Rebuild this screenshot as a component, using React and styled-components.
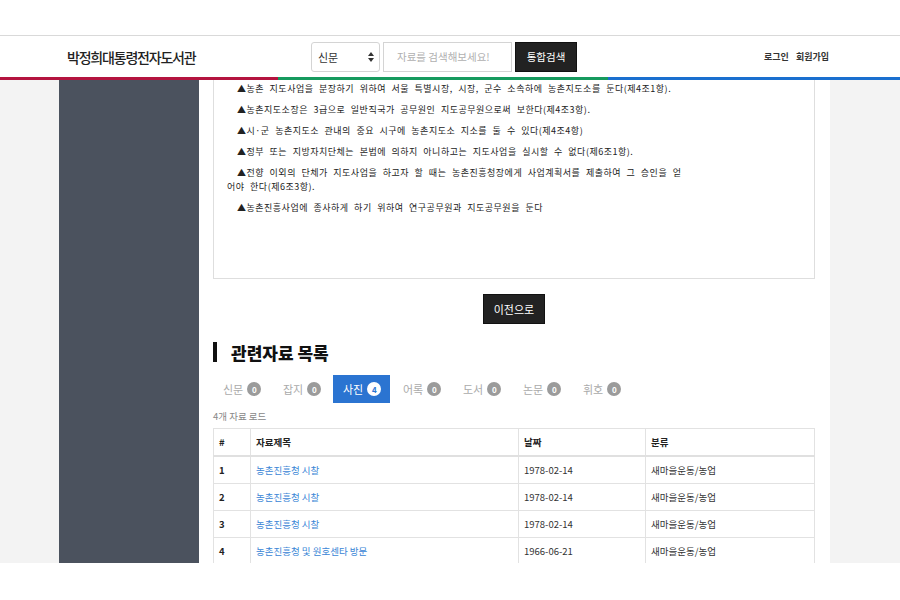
import React from 'react';
import styled, {createGlobalStyle} from "styled-components";

const Global = createGlobalStyle`
  body {
    margin: 0;
    background: #fff;
    font-family: "Noto Sans CJK KR", "Noto Sans", sans-serif;
    color: #333;
  }
`;

const Frame = styled.div`
  width: 900px;
  height: 600px;
  overflow: hidden;
  display: flex;
  flex-direction: column;
`;

const TopGap = styled.div`
  height: 35px;
  border-bottom: 1px solid #d9d9d9;
`;

const Header = styled.header`
  height: 41px;
  display: flex;
  align-items: center;
  padding: 0 71px 0 67px;
`;

const Logo = styled.h1`
  margin: 0;
  width: 141px;
  white-space: nowrap;
  font-size: 14px;
  font-weight: 500;
  letter-spacing: -1.2px;
  color: #222;
`;

const Search = styled.form`
  display: flex;
  gap: 3px;
  margin-left: 103px;
  height: 30px;
`;

const Select = styled.div`
  width: 69px;
  box-sizing: border-box;
  border: 1px solid #d4d4d4;
  border-radius: 3px;
  display: flex;
  align-items: center;
  justify-content: space-between;
  padding: 0 5px 0 6px;
  font-size: 11px;
  color: #333;
`;

const Input = styled.div`
  width: 129px;
  box-sizing: border-box;
  border: 1px solid #d4d4d4;
  display: flex;
  align-items: center;
  padding-left: 13px;
  font-size: 10.5px;
  color: #b0b0b0;
`;

const DarkButton = styled.button`
  border: none;
  background: #222;
  color: #fff;
  font-family: inherit;
  font-size: ${({small}) => small ? '11px' : '10.5px'};
  width: ${({w}) => w}px;
  height: ${({h}) => h}px;
  padding: 0;
  border: 1px solid #111;
`;

const UserMenu = styled.nav`
  margin-left: auto;
  display: flex;
  gap: 7px;
  font-size: 9px;
  font-weight: 700;
  color: #333;
`;

const ColorBar = styled.div`
  height: 3px;
  display: flex;
`;

const Stripe = styled.div`
  width: ${({w}) => w}px;
  flex: ${({w}) => w ? 'none' : 1};
  background: ${({c}) => c};
`;

const Main = styled.div`
  height: 483px;
  display: flex;
  overflow: hidden;
`;

const Gutter = styled.div`
  width: ${({w}) => w}px;
  background: #f3f3f3;
`;

const Sidebar = styled.aside`
  width: 140px;
  background: #4b525e;
`;

const Content = styled.section`
  width: 631px;
  box-sizing: border-box;
  padding: 0 15px 0 14px;
  background: #fff;
`;

const TextBox = styled.div`
  border: 1px solid #dedede;
  border-top: none;
  height: 196px;
  padding: 2px 0 0 13px;
`;

const Para = styled.p`
  margin: 0 0 7px;
  font-size: 9px;
  line-height: 14px;
  letter-spacing: 0.5px;
  word-spacing: 3px;
  text-indent: 10px;
  color: #222;
`;

const Center = styled.div`
  display: flex;
  justify-content: center;
  padding-top: 15px;
`;

const Heading = styled.h2`
  margin: 18px 0 0;
  display: flex;
  align-items: center;
  gap: 14px;
  font-size: 17px;
  font-weight: 900;
  color: #111;
  height: 20px;
  &::before {
    content: "";
    width: 4px;
    height: 20px;
    background: #111;
  }
`;

const Tabs = styled.div`
  display: flex;
  gap: 3px;
  margin-top: 13px;
`;

const Tab = styled.div`
  width: 57px;
  height: 28px;
  box-sizing: border-box;
  padding-left: 10px;
  display: flex;
  align-items: center;
  gap: 4px;
  font-size: 11px;
  color: ${({active}) => active ? '#fff' : '#aaa'};
  background: ${({active}) => active ? '#2b74d1' : 'transparent'};
`;

const Badge = styled.span`
  width: 14px;
  height: 14px;
  border-radius: 50%;
  display: flex;
  align-items: center;
  justify-content: center;
  font-size: 8px;
  font-weight: 700;
  background: ${({active}) => active ? '#fff' : '#9b9b9b'};
  color: ${({active}) => active ? '#2b74d1' : '#fff'};
`;

const Count = styled.div`
  margin-top: 6px;
  font-size: 9.5px;
  color: #888;
`;

const Table = styled.table`
  margin-top: 5px;
  width: 602px;
  border-collapse: collapse;
  font-size: 9.5px;
  color: #333;
  th, td {
    border: 1px solid #e2e2e2;
    height: 26px;
    padding: 0 5px;
    text-align: left;
  }
  th {
    font-weight: 700;
    border-bottom: 2px solid #e0e0e0;
    color: #222;
  }
`;

const Num = styled.td`
  font-weight: 700;
  color: #222;
`;

const TitleLink = styled.a`
  color: #3a86d6;
  text-decoration: none;
`;

const BottomGap = styled.div`
  flex: 1;
`;

const SortIcon = () => (
    <svg width="6" height="10" viewBox="0 0 6 10">
        <path d="M3 0 L6 4 L0 4 Z M3 10 L6 6 L0 6 Z" fill="#333"/>
    </svg>
);

const paragraphs = [
    "▲농촌 지도사업을 분장하기 위하여 서울 특별시장, 시장, 군수 소속하에 농촌지도소를 둔다(제4조1항).",
    "▲농촌지도소장은 3급으로 일반직국가 공무원인 지도공무원으로써 보한다(제4조3항).",
    "▲시·군 농촌지도소 관내의 중요 시구에 농촌지도소 지소를 둘 수 있다(제4조4항)",
    "▲정부 또는 지방자치단체는 본법에 의하지 아니하고는 지도사업을 실시할 수 없다(제6조1항).",
    ["▲전향 이외의 단체가 지도사업을 하고자 할 때는 농촌진흥청장에게 사업계획서를 제출하여 그 승인을 얻", "어야 한다(제6조3항)."],
    "▲농촌진흥사업에 종사하게 하기 위하여 연구공무원과 지도공무원을 둔다",
];

const tabs = [
    {label: "신문", n: 0},
    {label: "잡지", n: 0},
    {label: "사진", n: 4, active: true},
    {label: "어록", n: 0},
    {label: "도서", n: 0},
    {label: "논문", n: 0},
    {label: "휘호", n: 0},
];

const rows = [
    {title: "농촌진흥청 시찰", date: "1978-02-14"},
    {title: "농촌진흥청 시찰", date: "1978-02-14"},
    {title: "농촌진흥청 시찰", date: "1978-02-14"},
    {title: "농촌진흥청 및 원호센타 방문", date: "1966-06-21"},
];

function App() {
    return (
        <Frame>
            <Global/>
            <TopGap/>
            <Header>
                <Logo>박정희대통령전자도서관</Logo>
                <Search>
                    <Select>
                        신문
                        <SortIcon/>
                    </Select>
                    <Input>자료를 검색해보세요!</Input>
                    <DarkButton type="button" w={62} h={30}>통합검색</DarkButton>
                </Search>
                <UserMenu>
                    <span>로그인</span>
                    <span>회원가입</span>
                </UserMenu>
            </Header>
            <ColorBar>
                <Stripe w={278} c="#b4143f"/>
                <Stripe w={330} c="#169a5e"/>
                <Stripe c="#1a6fcf"/>
            </ColorBar>
            <Main>
                <Gutter w={59}/>
                <Sidebar/>
                <Content>
                    <TextBox>
                        {paragraphs.map((p, i) => (
                            <Para key={i}>
                                {Array.isArray(p) ? <>{p[0]}<br/>{p[1]}</> : p}
                            </Para>
                        ))}
                    </TextBox>
                    <Center>
                        <DarkButton type="button" small w={62} h={30}>이전으로</DarkButton>
                    </Center>
                    <Heading>관련자료 목록</Heading>
                    <Tabs>
                        {tabs.map(t => (
                            <Tab key={t.label} active={t.active}>
                                {t.label}
                                <Badge active={t.active}>{t.n}</Badge>
                            </Tab>
                        ))}
                    </Tabs>
                    <Count>4개 자료 로드</Count>
                    <Table>
                        <thead>
                        <tr>
                            <th style={{width: 26}}>#</th>
                            <th style={{width: 257}}>자료제목</th>
                            <th style={{width: 116}}>날짜</th>
                            <th>분류</th>
                        </tr>
                        </thead>
                        <tbody>
                        {rows.map((r, i) => (
                            <tr key={i}>
                                <Num>{i + 1}</Num>
                                <td><TitleLink href="#">{r.title}</TitleLink></td>
                                <td>{r.date}</td>
                                <td>새마을운동/농업</td>
                            </tr>
                        ))}
                        </tbody>
                    </Table>
                </Content>
                <Gutter w={70}/>
            </Main>
            <BottomGap/>
        </Frame>
    );
}

export default App;
